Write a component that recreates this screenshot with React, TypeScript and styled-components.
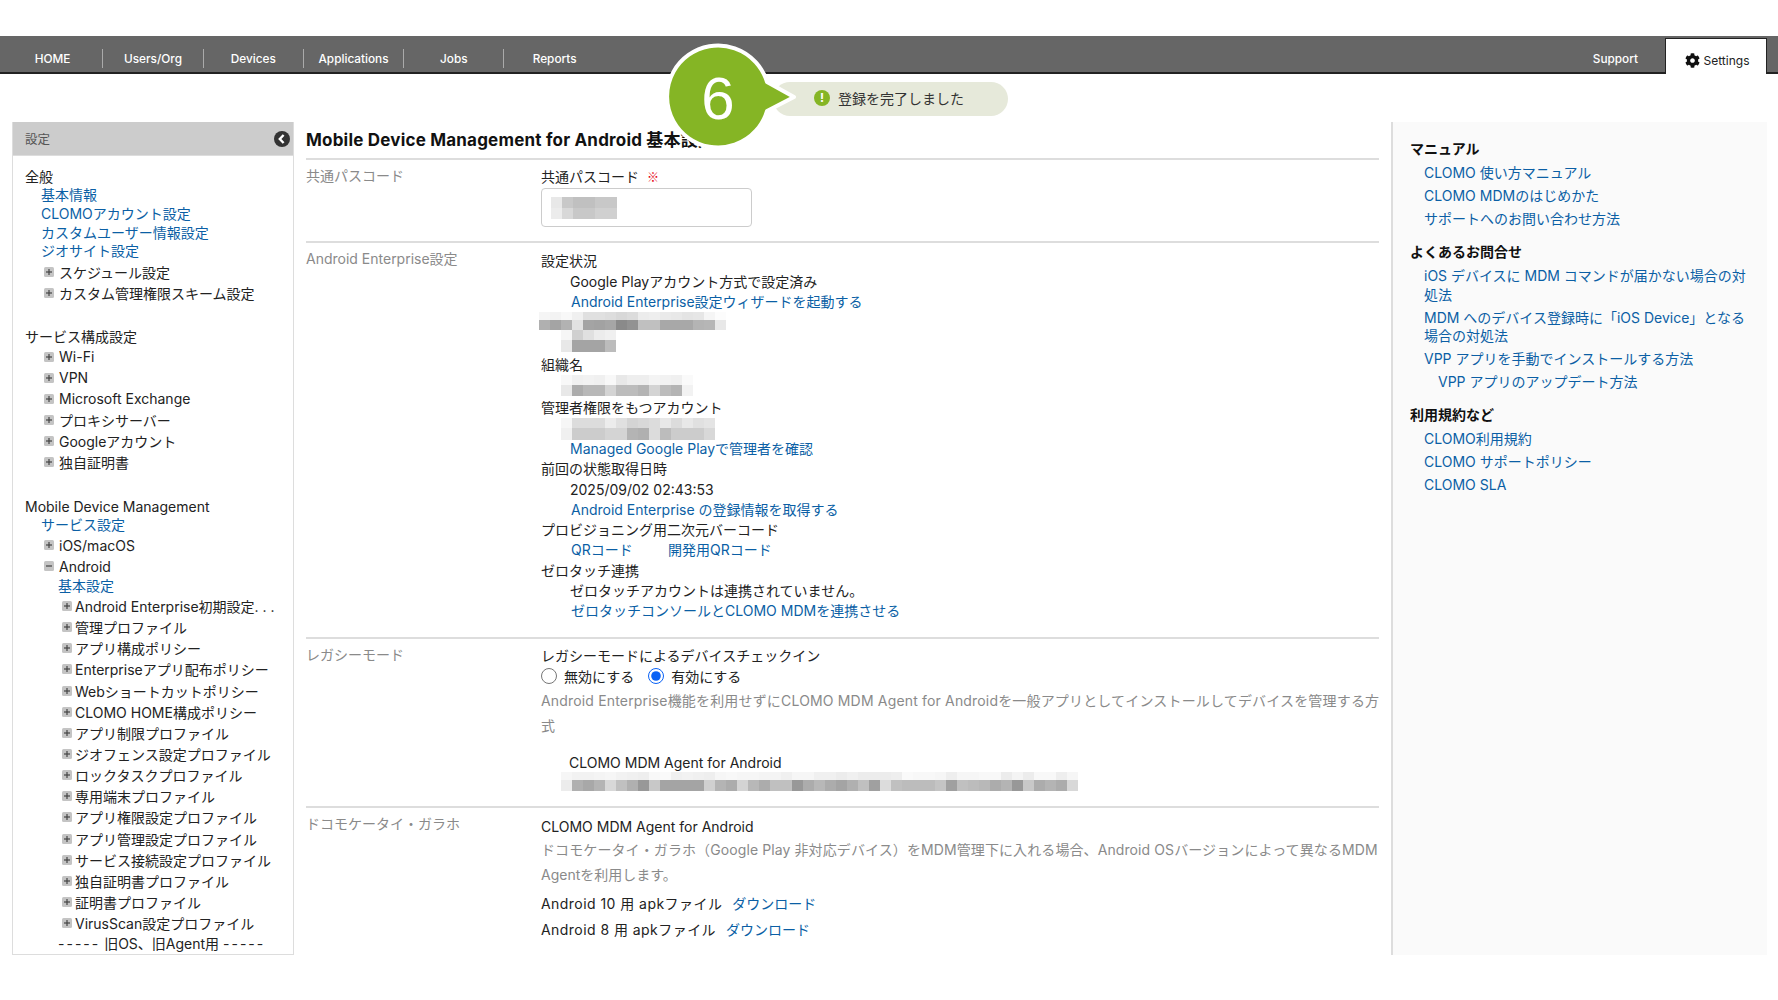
import React from 'react';
import styled, { createGlobalStyle } from 'styled-components';
import { FaCog } from 'react-icons/fa';

const GlobalStyle = createGlobalStyle`
	html, body {
		margin: 0;
		padding: 0;
		background: #fff;
	}
	body {
		font-family: 'Inter', 'Noto Sans CJK JP', sans-serif;
		font-size: 14px;
		color: #222;
	}
	a {
		color: #0b5fa5;
		text-decoration: none;
	}
`;

const navItems = ['HOME', 'Users/Org', 'Devices', 'Applications', 'Jobs', 'Reports'];

const Page = styled.div`
	position: relative;
	width: 1778px;
	height: 1000px;
	padding-top: 36px;
	box-sizing: border-box;
	overflow: hidden;
`;

const TopBar = styled.nav`
	display: flex;
	align-items: flex-end;
	height: 38px;
	box-sizing: border-box;
	padding-left: 3px;
	background: #666;
	border-bottom: 2px solid #222;
`;

const NavItem = styled.a`
	width: 100.3px;
	height: 19px;
	margin-bottom: 4px;
	line-height: 21px;
	text-align: center;
	font-size: 11.8px;
	font-weight: 500;
	color: #fff;
	box-sizing: border-box;
	border-right: 1.5px solid #aaa;

	&:last-of-type {
		border-right: none;
	}
`;

const NavRight = styled.div`
	display: flex;
	align-items: flex-end;
	margin-left: auto;
	margin-right: 11px;
	margin-bottom: -2px;
`;

const SupportLink = styled.a`
	height: 19px;
	margin-right: 27px;
	margin-bottom: 5px;
	line-height: 19px;
	font-size: 11.8px;
	font-weight: 500;
	color: #fff;
`;

const SettingsTab = styled.a`
	display: flex;
	align-items: center;
	justify-content: center;
	gap: 4px;
	width: 102px;
	height: 36px;
	box-sizing: border-box;
	padding: 7px 0 0 2px;
	background: #fff;
	border: 1.5px solid #222;
	border-bottom: none;
	font-size: 12px;
	color: #222;
`;

const Columns = styled.div`
	display: flex;
	gap: 12px;
	height: 833px;
	margin-top: 48px;
	padding-left: 12px;
`;

const SidePanel = styled.aside`
	width: 282px;
	flex: none;
	box-sizing: border-box;
	border: 1.5px solid #ddd;
	border-top: none;
	overflow: hidden;
`;

const SideHeader = styled.div`
	display: flex;
	align-items: center;
	justify-content: space-between;
	height: 33px;
	padding: 0 3px 0 12px;
	background: #ccc;
	border-bottom: 1px solid #ddd;
	font-size: 12.5px;
	color: #555;
`;

const SideBody = styled.div`
	padding: 11px 0 0 12px;
`;

const TreeHeading = styled.div<{ $mt?: number }>`
	height: 19px;
	line-height: 19px;
	margin-top: ${(p) => p.$mt ?? 0}px;
	white-space: nowrap;
`;

const TreeLink = styled.a<{ $indent: number }>`
	display: block;
	height: 18.75px;
	line-height: 18.75px;
	padding-left: ${(p) => p.$indent}px;
	white-space: nowrap;
`;

const TreeNode = styled.div<{ $indent: number; $deep?: boolean }>`
	display: flex;
	align-items: center;
	gap: ${(p) => (p.$deep ? 3 : 5)}px;
	height: ${(p) => (p.$deep ? 21.15 : 21)}px;
	padding-left: ${(p) => p.$indent}px;
	white-space: pre;
`;

const TreeNote = styled.div`
	height: 19px;
	line-height: 19px;
	padding-left: 33px;
	white-space: nowrap;
`;

const Dashes = styled.span`
	letter-spacing: 2px;
`;

const Main = styled.main`
	width: 1073px;
	flex: none;
`;

const Title = styled.h1`
	height: 36px;
	margin: 0;
	line-height: 36px;
	font-size: 17px;
	font-weight: 700;
	letter-spacing: 0.2px;
	color: #111;
	border-bottom: 2px solid #ddd;
`;

const Section = styled.section<{ $pb: number }>`
	display: grid;
	grid-template-columns: 235px 1fr;
	padding: 7px 0 ${(p) => p.$pb}px;
	border-bottom: 2px solid #ddd;

	&:last-of-type {
		border-bottom: none;
	}
`;

const SectionLabel = styled.div`
	margin-top: -1px;
	line-height: 20px;
	color: #8a8a8a;
`;

const Field = styled.div`
	display: flex;
	flex-direction: column;
	min-width: 0;
`;

const Line = styled.div<{ $indent?: number; $mt?: number }>`
	height: 20px;
	line-height: 20px;
	margin-top: ${(p) => p.$mt ?? 0}px;
	padding-left: ${(p) => p.$indent ?? 0}px;
	white-space: nowrap;
`;

const Required = styled.span`
	margin-left: 8px;
	font-family: 'Noto Sans CJK JP', sans-serif;
	font-size: 12px;
	color: #e60012;
`;

const HelpLine = styled.div<{ $mt?: number; $ls?: number }>`
	height: 25px;
	line-height: 25px;
	margin-top: ${(p) => p.$mt ?? 0}px;
	letter-spacing: ${(p) => p.$ls ?? 0}px;
	white-space: nowrap;
	color: #8a8a8a;
`;

const InputBox = styled.div`
	display: flex;
	flex-direction: column;
	justify-content: center;
	width: 211px;
	height: 39px;
	margin-top: 1px;
	box-sizing: border-box;
	padding-left: 9px;
	border: 1px solid #ccc;
	border-radius: 4px;
`;

const MosaicWrap = styled.div<{ $left: number; $mt?: number }>`
	margin-left: ${(p) => p.$left}px;
	margin-top: ${(p) => p.$mt ?? 0}px;
`;

const MosaicRow = styled.div<{ $h: number }>`
	display: flex;
	height: ${(p) => p.$h}px;
`;

const MosaicCell = styled.span`
	width: 11px;
	height: 100%;
	flex: none;
`;

const RadioRow = styled.div`
	display: flex;
	align-items: center;
	height: 20px;
`;

const RadioLabel = styled.label`
	display: flex;
	align-items: center;
	gap: 7px;
	margin-right: 14px;
`;

const RadioInput = styled.input`
	width: 16px;
	height: 16px;
	margin: 0;
	accent-color: #0a62f5;
`;

const ApkName = styled.span`
	letter-spacing: 0.45px;
`;

const LinkGap = styled.a`
	margin-left: 10px;
`;

const QrLink = styled.a`
	display: inline-block;
	width: 97px;
`;

const HelpPanel = styled.aside`
	width: 376px;
	flex: none;
	box-sizing: border-box;
	padding: 17px 17px 0 17px;
	background: #fafafa;
	border-left: 2px solid #ddd;
`;

const HelpHeading = styled.h3<{ $mt?: number }>`
	height: 20px;
	margin: ${(p) => p.$mt ?? 0}px 0 3px;
	line-height: 20px;
	font-size: 14px;
	font-weight: 700;
	color: #111;
`;

const HelpLink = styled.a<{ $sub?: boolean }>`
	display: block;
	margin-left: ${(p) => (p.$sub ? 28 : 14)}px;
	padding: 2.2px 0;
	line-height: 18.5px;
`;

const ToastPill = styled.div`
	position: absolute;
	left: 773px;
	top: 82px;
	display: flex;
	align-items: center;
	gap: 8px;
	width: 235px;
	height: 34px;
	box-sizing: border-box;
	padding: 0 0 2px 41px;
	background: #e6e9da;
	border-radius: 17px;
	font-size: 14px;
	color: #333;
`;

const ToastDot = styled.span`
	width: 16px;
	height: 16px;
	flex: none;
	border-radius: 50%;
	background: #85b525;
	color: #fff;
	font-size: 12px;
	font-weight: 700;
	line-height: 16px;
	text-align: center;
`;

const Callout = styled.div`
	position: absolute;
	left: 659px;
	top: 36px;
	width: 150px;
	height: 120px;
`;

const CalloutNumber = styled.span`
	position: absolute;
	left: 0;
	top: 0;
	width: 118px;
	text-align: center;
	line-height: 126px;
	font-family: 'Liberation Sans', sans-serif;
	font-size: 60px;
	color: #fff;
`;

function PlusBox({ open }: { open?: boolean }) {
	return (
		<svg width='10' height='10' viewBox='0 0 10 10' style={{ flex: 'none' }}>
			<rect x='0' y='0' width='10' height='10' rx='1.5' fill='#c4c4c4' />
			<rect x='2' y='4.4' width='6' height='1.2' fill='#444' />
			{!open && <rect x='4.4' y='2' width='1.2' height='6' fill='#444' />}
		</svg>
	);
}

function CollapseIcon() {
	return (
		<svg width='16' height='16' viewBox='0 0 16 16'>
			<circle cx='8' cy='8' r='8' fill='#333' />
			<path d='M9.6 4 L5.8 8 L9.6 12' fill='none' stroke='#fff' strokeWidth='2.4' />
		</svg>
	);
}

function Mosaic({ left, mt, rows }: { left: number; mt?: number; rows: { h: number; cells: string[] }[] }) {
	return (
		<MosaicWrap $left={left} $mt={mt}>
			{rows.map((row, i) => (
				<MosaicRow key={i} $h={row.h}>
					{row.cells.map((c, j) => (
						<MosaicCell key={j} style={{ background: `#${c}${c}${c}` }} />
					))}
				</MosaicRow>
			))}
		</MosaicWrap>
	);
}

const cells = (s: string) => s.split(' ');

const general = ['基本情報', 'CLOMOアカウント設定', 'カスタムユーザー情報設定', 'ジオサイト設定'];
const generalNodes = ['スケジュール設定', 'カスタム管理権限スキーム設定'];
const serviceNodes = ['Wi-Fi', 'VPN', 'Microsoft Exchange', 'プロキシサーバー', 'Googleアカウント', '独自証明書'];
const androidNodes = [
	'Android Enterprise初期設定. . .',
	'管理プロファイル',
	'アプリ構成ポリシー',
	'Enterpriseアプリ配布ポリシー',
	'Webショートカットポリシー',
	'CLOMO HOME構成ポリシー',
	'アプリ制限プロファイル',
	'ジオフェンス設定プロファイル',
	'ロックタスクプロファイル',
	'専用端末プロファイル',
	'アプリ権限設定プロファイル',
	'アプリ管理設定プロファイル',
	'サービス接続設定プロファイル',
	'独自証明書プロファイル',
	'証明書プロファイル',
	'VirusScan設定プロファイル',
];

function Sidebar() {
	return (
		<SidePanel>
			<SideHeader>
				設定
				<CollapseIcon />
			</SideHeader>
			<SideBody>
				<TreeHeading>全般</TreeHeading>
				{general.map((t) => (
					<TreeLink key={t} href='#' $indent={16}>
						{t}
					</TreeLink>
				))}
				{generalNodes.map((t) => (
					<TreeNode key={t} $indent={19}>
						<PlusBox />
						{t}
					</TreeNode>
				))}
				<TreeHeading $mt={24}>サービス構成設定</TreeHeading>
				{serviceNodes.map((t) => (
					<TreeNode key={t} $indent={19}>
						<PlusBox />
						{t}
					</TreeNode>
				))}
				<TreeHeading $mt={25}>Mobile Device Management</TreeHeading>
				<TreeLink href='#' $indent={16}>
					サービス設定
				</TreeLink>
				<TreeNode $indent={19}>
					<PlusBox />
					iOS/macOS
				</TreeNode>
				<TreeNode $indent={19}>
					<PlusBox open />
					Android
				</TreeNode>
				<TreeLink href='#' $indent={33}>
					基本設定
				</TreeLink>
				{androidNodes.map((t) => (
					<TreeNode key={t} $indent={37} $deep>
						<PlusBox />
						{t}
					</TreeNode>
				))}
				<TreeNote>
					<Dashes>-----</Dashes> 旧OS、旧Agent用 <Dashes>-----</Dashes>
				</TreeNote>
			</SideBody>
		</SidePanel>
	);
}

function HelpColumn() {
	return (
		<HelpPanel>
			<HelpHeading>マニュアル</HelpHeading>
			<HelpLink href='#'>CLOMO 使い方マニュアル</HelpLink>
			<HelpLink href='#'>CLOMO MDMのはじめかた</HelpLink>
			<HelpLink href='#'>サポートへのお問い合わせ方法</HelpLink>
			<HelpHeading $mt={11.5}>よくあるお問合せ</HelpHeading>
			<HelpLink href='#'>iOS デバイスに MDM コマンドが届かない場合の対処法</HelpLink>
			<HelpLink href='#'>MDM へのデバイス登録時に「iOS Device」となる場合の対処法</HelpLink>
			<HelpLink href='#'>VPP アプリを手動でインストールする方法</HelpLink>
			<HelpLink href='#' $sub>
				VPP アプリのアップデート方法
			</HelpLink>
			<HelpHeading $mt={11.5}>利用規約など</HelpHeading>
			<HelpLink href='#'>CLOMO利用規約</HelpLink>
			<HelpLink href='#'>CLOMO サポートポリシー</HelpLink>
			<HelpLink href='#'>CLOMO SLA</HelpLink>
		</HelpPanel>
	);
}

export default function App() {
	return (
		<Page>
			<GlobalStyle />
			<TopBar>
				{navItems.map((t) => (
					<NavItem key={t} href='#'>
						{t}
					</NavItem>
				))}
				<NavRight>
					<SupportLink href='#'>Support</SupportLink>
					<SettingsTab href='#'>
						<FaCog size={15} color='#111' />
						Settings
					</SettingsTab>
				</NavRight>
			</TopBar>
			<Columns>
				<Sidebar />
				<Main>
					<Title>Mobile Device Management for Android 基本設定</Title>
					<Section $pb={14}>
						<SectionLabel>共通パスコード</SectionLabel>
						<Field>
							<Line>
								共通パスコード<Required>※</Required>
							</Line>
							<InputBox>
								<Mosaic
									left={0}
									rows={[
										{ h: 11, cells: cells('e8 c8 c0 c0 c8 c8') },
										{ h: 11, cells: cells('ec d8 c8 c8 d0 d0') },
									]}
								/>
							</InputBox>
						</Field>
					</Section>
					<Section $pb={16}>
						<SectionLabel>Android Enterprise設定</SectionLabel>
						<Field>
							<Line $mt={1}>設定状況</Line>
							<Line $indent={29} $mt={1}>
								Google Playアカウント方式で設定済み
							</Line>
							<Line $indent={30}>
								<a href='#'>Android Enterprise設定ウィザードを起動する</a>
							</Line>
							<Mosaic
								left={-2}
								rows={[
									{ h: 8, cells: cells('f5 f3 f8 f0 e0 e0 dd d8 dc ec ee ea e8 e4 e6 f5 fc') },
									{ h: 10, cells: cells('b0 a4 b2 e2 a4 a2 a6 8a 92 c0 c0 a8 a8 a8 b4 b6 e8') },
								]}
							/>
							<Mosaic
								left={20}
								rows={[
									{ h: 10, cells: cells('f6 d0 e0 ec f0') },
									{ h: 12, cells: cells('e8 a4 a4 a4 bc') },
								]}
							/>
							<Line $mt={3}>組織名</Line>
							<Mosaic
								left={20}
								rows={[
									{ h: 10, cells: cells('f8 f0 f2 f0 f8 e8 ee ee f4 f2 f0 fa') },
									{ h: 11, cells: cells('e8 ac b8 b8 d4 bc bc b4 d4 bc b4 f2') },
								]}
							/>
							<Line $mt={2}>管理者権限をもつアカウント</Line>
							<Mosaic
								left={20}
								rows={[
									{ h: 10, cells: cells('f6 dc dc dc ec e0 d4 d8 dc e8 dc e8 e0 e4') },
									{ h: 12, cells: cells('f0 cc cc cc d4 d4 b4 b0 dc bc cc cc cc d8') },
								]}
							/>
							<Line $indent={29} $mt={-1}>
								<a href='#'>Managed Google Playで管理者を確認</a>
							</Line>
							<Line>前回の状態取得日時</Line>
							<Line $indent={29} $mt={1}>
								2025/09/02 02:43:53
							</Line>
							<Line $indent={30}>
								<a href='#'>Android Enterprise の登録情報を取得する</a>
							</Line>
							<Line>プロビジョニング用二次元バーコード</Line>
							<Line $indent={30}>
								<QrLink href='#'>QRコード</QrLink>
								<a href='#'>開発用QRコード</a>
							</Line>
							<Line $mt={1}>ゼロタッチ連携</Line>
							<Line $indent={29}>ゼロタッチアカウントは連携されていません。</Line>
							<Line $indent={30}>
								<a href='#'>ゼロタッチコンソールとCLOMO MDMを連携させる</a>
							</Line>
						</Field>
					</Section>
					<Section $pb={15}>
						<SectionLabel>レガシーモード</SectionLabel>
						<Field>
							<Line>レガシーモードによるデバイスチェックイン</Line>
							<RadioRow>
								<RadioLabel>
									<RadioInput type='radio' name='legacy' />
									無効にする
								</RadioLabel>
								<RadioLabel>
									<RadioInput type='radio' name='legacy' defaultChecked />
									有効にする
								</RadioLabel>
							</RadioRow>
							<HelpLine $mt={2} $ls={0.17}>
								Android Enterprise機能を利用せずにCLOMO MDM Agent for Androidを一般アプリとしてインストールしてデバイスを管理する方
							</HelpLine>
							<HelpLine>式</HelpLine>
							<Line $indent={28} $mt={15}>
								CLOMO MDM Agent for Android
							</Line>
							<Mosaic
								left={20}
								mt={-1}
								rows={[
									{
										h: 8,
										cells: cells(
											'f6 f2 f2 f4 f6 f2 f0 ee f8 fa f0 f2 f0 ee f6 f8 f6 f6 f4 f4 f0 f6 f6 f0 f0 ec f0 ec ec ec ee fa f8 f8 f6 ee f6 f6 f8 f8 ec f4 ec f8 f8 ee f6',
										),
									},
									{
										h: 11,
										cells: cells(
											'ec b0 a8 b4 d8 c0 b0 98 c8 a4 a4 a4 a4 d0 b4 ac d4 b8 ac c0 c0 98 ac b8 ac a4 b0 c0 a0 dc c0 bc bc bc c4 a0 c0 bc b8 ac b4 98 c8 ac b4 ac d8',
										),
									},
								]}
							/>
						</Field>
					</Section>
					<Section $pb={0}>
						<SectionLabel>ドコモケータイ・ガラホ</SectionLabel>
						<Field>
							<Line $mt={2}>CLOMO MDM Agent for Android</Line>
							<HelpLine $ls={0.1}>
								ドコモケータイ・ガラホ（Google Play 非対応デバイス）をMDM管理下に入れる場合、Android OSバージョンによって異なるMDM
							</HelpLine>
							<HelpLine>Agentを利用します。</HelpLine>
							<Line $mt={7}>
								<ApkName>Android 10 用 apkファイル</ApkName>
								<LinkGap href='#'>ダウンロード</LinkGap>
							</Line>
							<Line $mt={6}>
								<ApkName>Android 8 用 apkファイル</ApkName>
								<LinkGap href='#'>ダウンロード</LinkGap>
							</Line>
						</Field>
					</Section>
				</Main>
				<HelpColumn />
			</Columns>
			<ToastPill>
				<ToastDot>!</ToastDot>
				登録を完了しました
			</ToastPill>
			<Callout>
				<svg width='150' height='120' viewBox='0 0 150 120'>
					<path d='M108 46 L135 61 L108 75 A51 51 0 1 1 108 46 Z' fill='#85b525' stroke='#fff' strokeWidth='4' strokeLinejoin='round' />
				</svg>
				<CalloutNumber>6</CalloutNumber>
			</Callout>
		</Page>
	);
}
